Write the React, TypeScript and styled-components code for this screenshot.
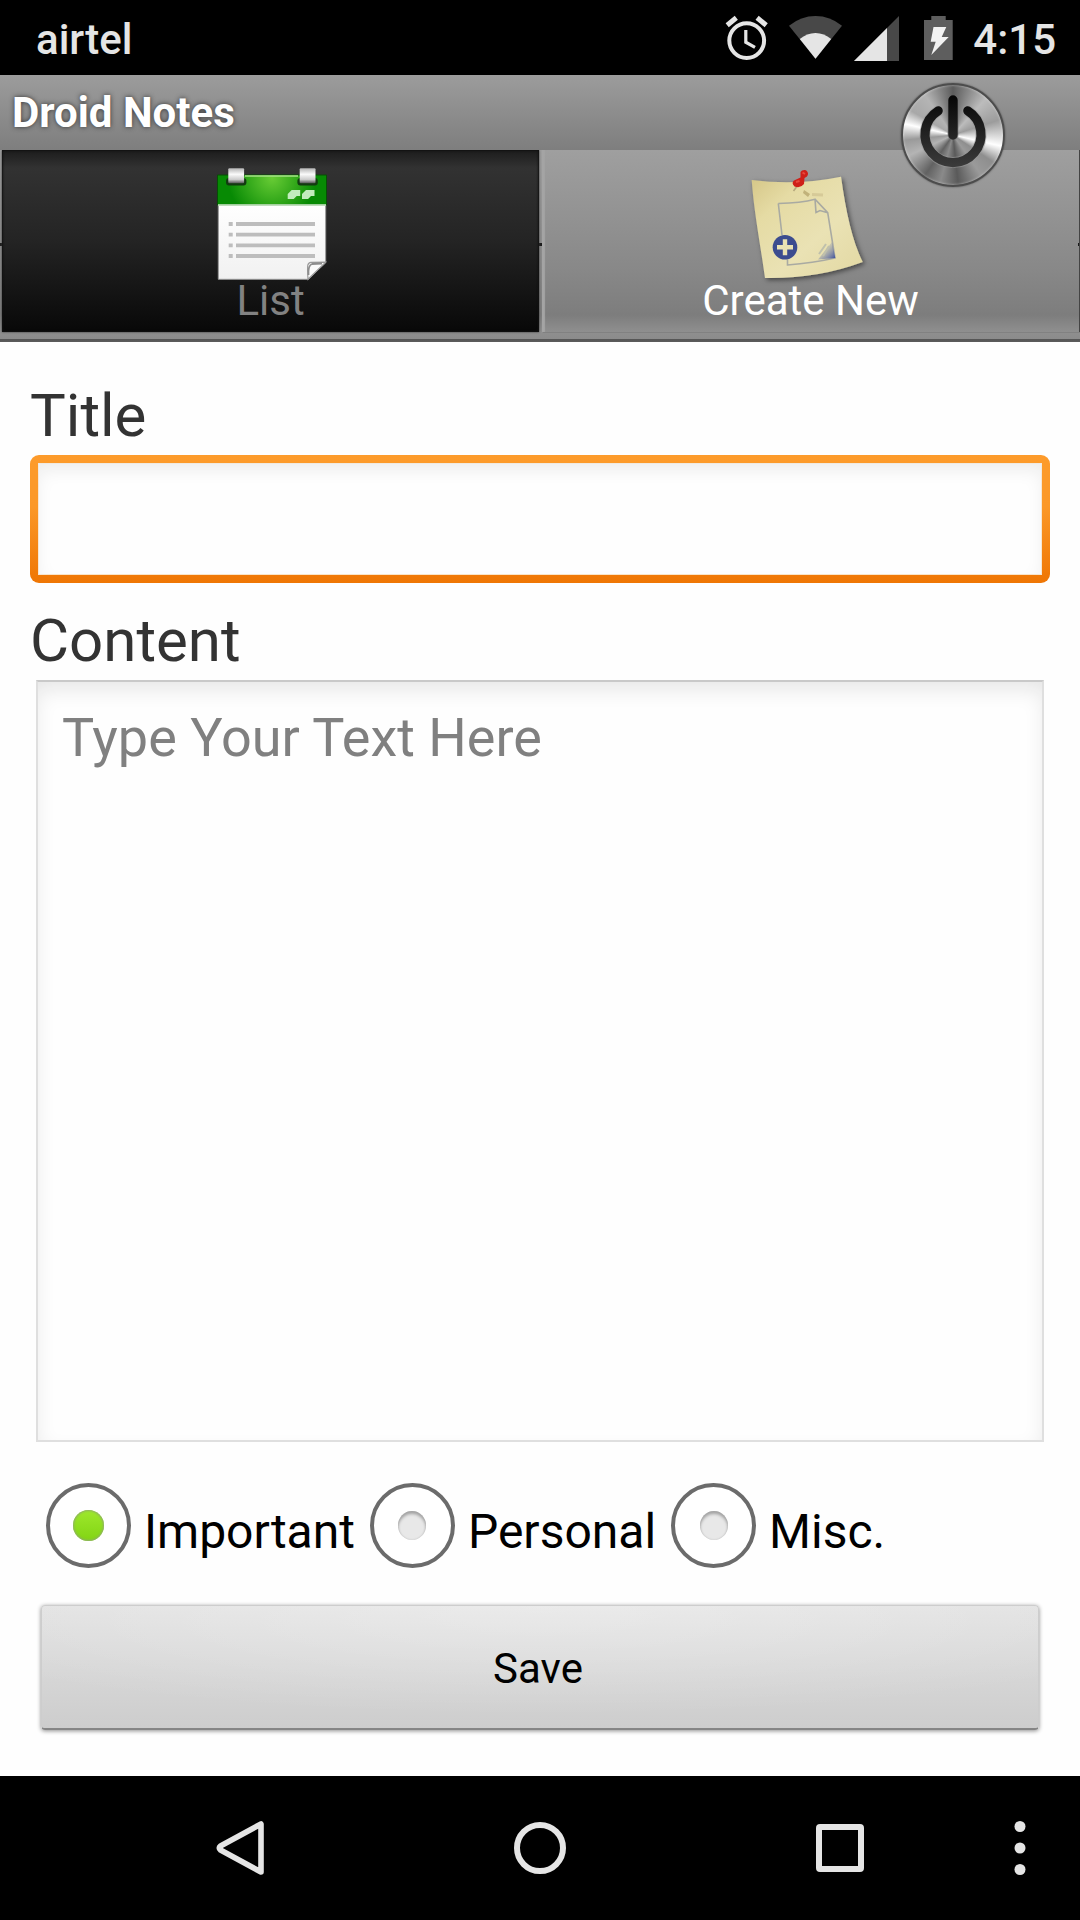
import React, { useState } from "react";
import styled, { createGlobalStyle, css } from "styled-components";

const GlobalStyle = createGlobalStyle`
  *, *::before, *::after { box-sizing: border-box; }
  body {
    margin: 0;
    background: #fefefe;
    font-family: Roboto, "Noto Sans", sans-serif;
  }
  button, input, textarea { font-family: inherit; }
`;

const Screen = styled.div`
  display: flex;
  flex-direction: column;
  min-height: 100vh;
`;

const StatusBar = styled.header`
  display: flex;
  align-items: center;
  justify-content: space-between;
  height: 75px;
  padding: 0 24px 0 36px;
  background: #000;
  color: #e5e5e5;
`;

const StatusText = styled.span`
  padding-top: 4px;
  font-size: 42px;
  line-height: 50px;
  font-weight: 500;
`;

const StatusIcons = styled.div`
  display: flex;
  align-items: center;
  gap: 12px;

  svg { display: block; overflow: visible; }
`;

const TitleBar = styled.div`
  position: relative;
  display: flex;
  align-items: center;
  height: 75px;
  padding: 0 12px;
  background: linear-gradient(#9c9c9c, #7e7e7e);
`;

const AppTitle = styled.h1`
  margin: 0;
  color: #fff;
  font-size: 42px;
  line-height: 50px;
  font-weight: 700;
  text-shadow: 0 0 5px #333;
`;

const PowerButton = styled.button`
  position: absolute;
  z-index: 1;
  top: 8px;
  right: 75px;
  width: 104px;
  height: 104px;
  padding: 0;
  border: 2px solid #4c4c4c;
  border-radius: 50%;
  background: conic-gradient(
    #5c5c5c 0deg, #bcbcbc 42deg, #9c9c9c 72deg, #fff 103deg, #8e8e8e 124deg,
    #9a9a9a 145deg, #5a5a5a 174deg, #8a8a8a 195deg, #626262 215deg,
    #b4b4b4 245deg, #9a9a9a 264deg, #fff 283deg, #a8a8a8 300deg,
    #b4b4b4 325deg, #5c5c5c 360deg
  );
  box-shadow: inset 0 0 2px 1px rgba(255, 255, 255, 0.25), 0 0 2px rgba(0, 0, 0, 0.5);

  svg { display: block; margin: -2px; overflow: visible; }
`;

const TabBar = styled.nav`
  display: flex;
  padding-bottom: 10px;
  background:
    linear-gradient(#1c1c1c, #1c1c1c) 0 93px / 3px 3px no-repeat,
    linear-gradient(#1c1c1c, #1c1c1c) 50% 93px / 4px 3px no-repeat,
    linear-gradient(#1c1c1c, #1c1c1c) 100% 93px / 2px 3px no-repeat,
    linear-gradient(#555, #5c5c5c) 0 100% / 100% 3px no-repeat,
    linear-gradient(#9f9f9f, #888 120px, #7d7d7d 165px, #8f8f8f 182px, #8a8a8a);
`;

const Tab = styled.button<{ $dark: boolean }>`
  display: flex;
  flex: 1 1 0;
  flex-direction: column;
  align-items: center;
  margin: 0 1px 0 2px;
  padding: 6px 0;
  border: 0 solid #555;
  background: none;
  color: #fff;
  font-size: 42px;
  line-height: 50px;

  svg { display: block; overflow: visible; }

  ${({ $dark }) =>
    $dark
      ? css`
          background: linear-gradient(#1c1c1c, #323232 18px, #242424 90px, #080808);
          color: #828282;
          box-shadow: inset 0 0 2px 1px #111, 0 0 2px #333;
        `
      : css`
          box-shadow: inset 4px 0 1px -1px #a4a4a4, 1px 0 1px #444;
        `}
`;

const NoteForm = styled.form`
  display: flex;
  flex: 1;
  flex-direction: column;
  padding: 39px 30px 46px;
`;

const Field = styled.div<{ $grow?: boolean }>`
  display: flex;
  flex-direction: column;
  flex: ${({ $grow }) => ($grow ? "1" : "none")};
  gap: 4px;
  margin-bottom: ${({ $grow }) => ($grow ? "41px" : "23px")};
`;

const FieldLabel = styled.label`
  color: #333;
  font-size: 60px;
  line-height: 70px;
`;

const TitleInput = styled.input`
  width: 100%;
  height: 128px;
  padding: 0 24px;
  border: 8px solid transparent;
  border-radius: 9px;
  outline: 0;
  background:
    linear-gradient(#fefefe, #fefefe) padding-box,
    linear-gradient(#fd9b2b, #fb9827 40%, #ef7604) border-box;
  box-shadow: inset 0 8px 18px -2px #ececec, inset 0 0 0 1px #fbe3c4;
  color: #000;
  font-size: 54px;
`;

const ContentInput = styled.textarea`
  flex: 1;
  margin: 0 6px;
  padding: 24px;
  border: 2px solid #dfdfdf;
  border-top-color: #c9c9c9;
  outline: 0;
  resize: none;
  background: #fefefe;
  box-shadow: inset 0 10px 22px -4px #e4e4e4;
  color: #000;
  font-size: 54px;
  line-height: 63px;

  &::placeholder { color: #808080; opacity: 1; }
`;

const Categories = styled.div`
  display: flex;
  gap: 15px;
  margin-bottom: 37px;
  padding: 0 16px;
`;

const Category = styled.label`
  display: flex;
  align-items: center;
  gap: 13px;
  color: #000;
  font-size: 48px;
  line-height: 56px;
`;

const CategoryName = styled.span`
  padding-top: 12px;
`;

const Radio = styled.input`
  appearance: none;
  display: grid;
  place-items: center;
  width: 85px;
  height: 85px;
  margin: 0;
  border: 4px solid #6b6b6b;
  border-radius: 50%;
  background: #fff;

  &::before {
    content: "";
    width: 28px;
    height: 29px;
    border-radius: 50%;
    background: #e8e8e8;
    box-shadow: inset 0 3px 3px #a4a4a4, inset 0 0 2px #bbb;
  }

  &:checked::before {
    width: 31px;
    height: 31px;
    background: linear-gradient(#9ee82c, #82d414);
    box-shadow: inset 0 0 2px 1px #8fae68;
  }
`;

const SaveButton = styled.button`
  height: 125px;
  margin: 0 11px;
  padding: 4px 4px 0 0;
  border: 1px solid #cdcdcd;
  border-bottom: 2px solid #858585;
  border-radius: 4px;
  background:
    radial-gradient(ellipse 70% 90% at 50% 0, rgba(255, 255, 255, 0.3), rgba(255, 255, 255, 0)),
    linear-gradient(#e2e2e2, #cdcdcd);
  box-shadow: 0 1px 4px rgba(0, 0, 0, 0.45);
  color: #000;
  font-size: 42px;
  line-height: 50px;
`;

const SystemNav = styled.nav`
  display: flex;
  height: 144px;
  padding: 0 30px 0 90px;
  background: #000;
`;

const NavButton = styled.button<{ $narrow?: boolean }>`
  display: flex;
  flex: ${({ $narrow }) => ($narrow ? "0 0 60px" : "1")};
  align-items: center;
  justify-content: center;
  padding: 0;
  border: 0;
  background: none;
  color: #e5e5e5;
`;

const AlarmIcon = () => (
  <svg width="51" height="44" fill="none" stroke="#e5e5e5" aria-hidden="true">
    <circle cx="20.7" cy="24.6" r="17.4" strokeWidth="4" />
    <path d="M1.2 9.2 10.3 1.8M40.2 9.2 31.1 1.8" strokeWidth="5" />
    <path d="M19.8 14V26.2L29 31.4" strokeWidth="3.2" />
  </svg>
);

const WifiIcon = () => (
  <svg width="53" height="44" aria-hidden="true">
    <path d="M0 9.7Q12 0 26.5 0T53 9.7L26.5 42.7Z" fill="#484848" />
    <path d="M10.8 23Q18 17 26.5 17T42.2 23L26.5 42.7Z" fill="#e5e5e5" />
  </svg>
);

const SignalIcon = () => (
  <svg width="55" height="44" aria-hidden="true">
    <path d="M45 0V45H0Z" fill="#484848" />
    <path d="M33 12V45H0Z" fill="#e5e5e5" />
  </svg>
);

const BatteryIcon = () => (
  <svg width="40" height="44" aria-hidden="true">
    <path d="M10.3 0H24.7V4H31.7V44H3V4H10.3Z" fill="#5e5e5e" />
    <path d="M12.5 11H25.3L20.7 21H27.7L10.3 39L14.7 25.7H9.7Z" fill="#f2f2f2" />
  </svg>
);

const PowerIcon = () => (
  <svg width="104" height="104" fill="none" strokeLinecap="round" aria-hidden="true">
    <defs>
      <linearGradient id="powerInk" gradientUnits="userSpaceOnUse" x1="0" y1="12" x2="0" y2="85">
        <stop offset="0" stopColor="#050505" />
        <stop offset="1" stopColor="#3c3c3c" />
      </linearGradient>
    </defs>
    <path d="M37.2 27.8A28 28 0 1 0 66.8 27.8" stroke="#999" strokeOpacity=".6" strokeWidth="11" />
    <path d="M52 17.5V52" stroke="#777" strokeOpacity=".6" strokeWidth="11" />
    <path d="M37.2 27.8A28 28 0 1 0 66.8 27.8" stroke="url(#powerInk)" strokeWidth="9.2" />
    <path d="M47.3 17a4.7 4.7 0 0 1 9.4 0V52a4.7 4.7 0 0 1-9.4 0Z" fill="url(#powerInk)" />
  </svg>
);

const ListIcon = () => (
  <svg width="120" height="120" aria-hidden="true">
    <defs>
      <radialGradient id="calGreen" gradientUnits="userSpaceOnUse" cx="61" cy="22" r="44">
        <stop offset="0" stopColor="#68cc35" />
        <stop offset="1" stopColor="#078a04" />
      </radialGradient>
      <linearGradient id="calPaper" x1="0" y1="0" x2="0" y2="1">
        <stop offset="0" stopColor="#fff" />
        <stop offset="1" stopColor="#f1f1f1" />
      </linearGradient>
      <linearGradient id="calClip" x1="0" y1="0" x2="0" y2="1">
        <stop offset="0" stopColor="#b5b5b5" />
        <stop offset=".4" stopColor="#fafafa" />
        <stop offset=".75" stopColor="#ccc" />
        <stop offset="1" stopColor="#555" />
      </linearGradient>
    </defs>
    <path d="M7.3 48H114.7V106.7L97.2 123.3H7.3Z" fill="url(#calPaper)" stroke="#999" />
    <path d="M6.5 19H115.5V49H6.5Z" fill="url(#calGreen)" stroke="#064f05" />
    <path d="M34 20H87" stroke="#a6e387" strokeWidth="1.5" />
    <path d="M7 49H115" stroke="#d5efd0" strokeWidth="1.5" />
    {[17.3, 88.7].map((x) => (
      <g key={x}>
        <rect x={x - 2.3} y="22" width="20.4" height="7.5" rx="3" fill="#123b10" />
        <rect x={x} y="12.3" width="15.8" height="15" rx="1" fill="url(#calClip)" />
      </g>
    ))}
    {[76.7, 91].map((x) => (
      <path key={x} transform={`translate(${x} 34)`} d="M0 9V4L4 0H12.5V6H9L6 9Z" fill="#c2ecbd" />
    ))}
    {[68, 78.7, 89.3, 100].map((y) => (
      <path key={y} d={`M17.7 ${y}H21.7M25 ${y}H104`} stroke="#bdbdbd" strokeWidth="3.8" />
    ))}
    <path d="M97 123.3C96 108 96.5 106.5 100 106.3L114.7 106.2Z" fill="#fafafa" stroke="#999" strokeWidth="1.2" />
    <path d="M97.5 119Q97 109 101 108L111 107.5" fill="none" stroke="#8d8d8d" strokeWidth="1.8" />
  </svg>
);

const NoteIcon = () => (
  <svg width="120" height="120" fill="none" aria-hidden="true">
    <defs>
      <linearGradient id="notePaper" x1="0" y1="0" x2="1" y2="1">
        <stop offset="0" stopColor="#d5c687" />
        <stop offset=".25" stopColor="#e5dba4" />
        <stop offset=".6" stopColor="#eae2b4" />
        <stop offset="1" stopColor="#e2d8a2" />
      </linearGradient>
      <linearGradient id="noteCorner" x1="0" y1="0" x2="1" y2="1">
        <stop offset=".2" stopColor="#8f98b5" stopOpacity="0" />
        <stop offset="1" stopColor="#34499a" />
      </linearGradient>
      <filter id="noteShadow" x="-20%" y="-20%" width="140%" height="140%">
        <feDropShadow dx="2" dy="2" stdDeviation="2.5" floodOpacity=".5" />
      </filter>
    </defs>
    <path
      d="M.7 24Q45 30 90 20.7C95 56 101 84 111.7 106Q66 123 14 122C9 86 3 56 .7 24Z"
      fill="url(#notePaper)"
      filter="url(#noteShadow)"
    />
    <path d="M53 34 59 38 57 41 52 37Z" fill="#c1b27a" />
    <path d="M61 38.5 72 39" stroke="#d6ca98" strokeWidth="3" />
    <path d="M45.5 31 42.5 35" stroke="#b5a97c" strokeWidth="1.5" />
    <path
      d="M49.5 16Q51 13.5 55 14.2Q58.5 17 56 20.5L53.5 22 53 28Q49 33 43.5 30.5Q40 27 43 24.5L49.5 21.5Z"
      fill="#cf2019"
    />
    <path d="M51.5 16.5 54 18M45 26 48.5 25" stroke="#e8493c" strokeWidth="2" />
    <path
      d="M27.3 47.5 31 79M36.5 104V109Q62 107 84 102L76.7 56.7 64 43.2Q50 47 27.3 47.5M64 43.2 65 56.5 69 54.5 76.7 56.7"
      stroke="#a9aaa2"
      strokeWidth="1.6"
    />
    <path d="M81 86 84.3 102 67 103.5Z" fill="url(#noteCorner)" />
    <path d="M68 98 75 88M72 100 78 90" stroke="#bfc0ac" strokeWidth="2" />
    <circle cx="34" cy="91.3" r="12.3" fill="#3c4c8f" />
    <path d="M34 83.3V99.3M26 91.3H42" stroke="#eae2b4" strokeWidth="4.4" />
  </svg>
);

const BackIcon = () => (
  <svg width="50" height="56" aria-hidden="true">
    <path d="M46 4V52L5.5 30Q3 28 5.5 26Z" fill="none" stroke="currentColor" strokeWidth="5.6" strokeLinejoin="round" />
  </svg>
);

const HomeIcon = () => (
  <svg width="52" height="52" aria-hidden="true">
    <circle cx="26" cy="26" r="23" fill="none" stroke="currentColor" strokeWidth="6" />
  </svg>
);

const RecentIcon = () => (
  <svg width="48" height="48" aria-hidden="true">
    <rect x="3" y="3" width="42" height="42" rx="1" fill="none" stroke="currentColor" strokeWidth="6" strokeLinejoin="round" />
  </svg>
);

const MoreIcon = () => (
  <svg width="12" height="54" fill="currentColor" aria-hidden="true">
    <circle cx="6" cy="5.5" r="5.5" />
    <circle cx="6" cy="27" r="5.5" />
    <circle cx="6" cy="48.5" r="5.5" />
  </svg>
);

const CATEGORIES = ["Important", "Personal", "Misc."];

export default function App() {
  const [category, setCategory] = useState(CATEGORIES[0]);

  return (
    <Screen>
      <GlobalStyle />
      <StatusBar>
        <StatusText>airtel</StatusText>
        <StatusIcons>
          <AlarmIcon />
          <WifiIcon />
          <SignalIcon />
          <BatteryIcon />
          <StatusText>4:15</StatusText>
        </StatusIcons>
      </StatusBar>

      <TitleBar>
        <AppTitle>Droid Notes</AppTitle>
        <PowerButton type="button" aria-label="Exit">
          <PowerIcon />
        </PowerButton>
      </TitleBar>

      <TabBar>
        <Tab type="button" $dark>
          <ListIcon />
          List
        </Tab>
        <Tab type="button" $dark={false} aria-current="page">
          <NoteIcon />
          Create New
        </Tab>
      </TabBar>

      <NoteForm onSubmit={(event) => event.preventDefault()}>
        <Field>
          <FieldLabel htmlFor="title">Title</FieldLabel>
          <TitleInput id="title" type="text" />
        </Field>
        <Field $grow>
          <FieldLabel htmlFor="content">Content</FieldLabel>
          <ContentInput id="content" placeholder="Type Your Text Here" />
        </Field>
        <Categories role="radiogroup" aria-label="Category">
          {CATEGORIES.map((name) => (
            <Category key={name}>
              <Radio
                type="radio"
                name="category"
                value={name}
                checked={category === name}
                onChange={() => setCategory(name)}
              />
              <CategoryName>{name}</CategoryName>
            </Category>
          ))}
        </Categories>
        <SaveButton type="submit">Save</SaveButton>
      </NoteForm>

      <SystemNav>
        <NavButton type="button" aria-label="Back">
          <BackIcon />
        </NavButton>
        <NavButton type="button" aria-label="Home">
          <HomeIcon />
        </NavButton>
        <NavButton type="button" aria-label="Recent apps">
          <RecentIcon />
        </NavButton>
        <NavButton type="button" aria-label="More options" $narrow>
          <MoreIcon />
        </NavButton>
      </SystemNav>
    </Screen>
  );
}
